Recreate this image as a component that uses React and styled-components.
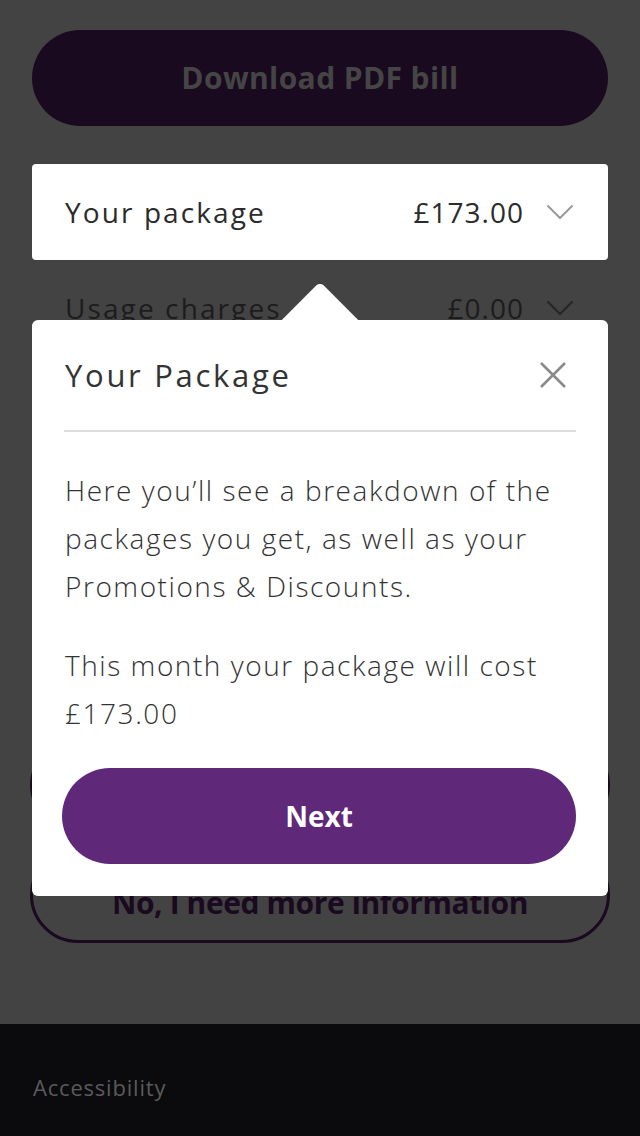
import styled, { createGlobalStyle } from 'styled-components';

const GlobalStyle = createGlobalStyle`
    * { box-sizing: border-box; }
    body {
        margin: 0;
        background: #424242;
        font-family: "Open Sans", "Liberation Sans", sans-serif;
    }
`;

const Page = styled.div`
    position: relative;
    width: 640px;
    min-height: 1136px;
    display: flex;
    flex-direction: column;
    background: #434343;
`;

const Main = styled.main`
    flex: 1;
    padding: 30px 32px 0;
    display: flex;
    flex-direction: column;
`;

const PillButton = styled.button`
    width: 100%;
    height: 96px;
    border-radius: 48px;
    border: ${(p) => (p.$outline ? '3px solid #1a0a1f' : 'none')};
    background: ${(p) => (p.$outline ? 'transparent' : '#1a0a1f')};
    color: ${(p) => (p.$outline ? '#1a0a1f' : '#454545')};
    padding-top: ${(p) => (p.$outline ? '16px' : '0')};
    font-family: inherit;
    font-size: 30px;
    font-weight: 700;
    letter-spacing: ${(p) => (p.$outline ? '-0.4px' : '0.4px')};
`;

const BillList = styled.div`
    margin-top: 38px;
    display: flex;
    flex-direction: column;
`;

const BillRow = styled.div`
    height: 96px;
    padding: 0 34px 0 33px;
    display: flex;
    align-items: center;
    border-radius: 4px;
    background: ${(p) => (p.$active ? '#ffffff' : 'transparent')};
    color: ${(p) => (p.$active ? '#2b2b2b' : '#1c1c1c')};
    font-size: 28px;
    letter-spacing: 2.1px;
`;

const RowLabel = styled.span`
    flex: 1;
`;

const RowAmount = styled.span`
    font-weight: 500;
    margin-right: 22px;
    letter-spacing: 1px;
`;

const Actions = styled.div`
    margin-top: 381px;
    display: flex;
    flex-direction: column;
    gap: 14px;
    margin-left: -2px;
    margin-right: -2px;
`;

const Footer = styled.footer`
    margin-top: 81px;
    height: 112px;
    background: #0b0a0d;
    display: flex;
    align-items: center;
    padding: 13px 33px 0;
    color: #5a5a5a;
    font-size: 22px;
    letter-spacing: 0.8px;
`;

const Popover = styled.section`
    position: absolute;
    top: 320px;
    left: 32px;
    width: 576px;
    background: #ffffff;
    border-radius: 6px;
    padding: 0 32px 32px;
    &::before {
        content: '';
        position: absolute;
        top: -27px;
        left: 261px;
        width: 54px;
        height: 54px;
        background: #ffffff;
        border-top-left-radius: 5px;
        transform: rotate(45deg);
    }
`;

const PopoverHeader = styled.header`
    position: relative;
    height: 112px;
    display: flex;
    align-items: center;
    justify-content: space-between;
    border-bottom: 2px solid #dddddd;
    padding-left: 1px;
`;

const PopoverTitle = styled.h2`
    margin: 0;
    font-size: 31px;
    font-weight: 400;
    color: #333333;
    letter-spacing: 2.7px;
`;

const CloseButton = styled.button`
    border: none;
    background: none;
    padding: 0;
    margin-right: 10px;
    display: flex;
`;

const Text = styled.p`
    margin: ${(p) => (p.$first ? '34px' : '31px')} 0 0 1px;
    font-size: 28px;
    font-weight: 300;
    line-height: 48px;
    letter-spacing: 1.55px;
    color: #333333;
`;

const NextButton = styled.button`
    margin-top: 31px;
    margin-left: -2px;
    width: calc(100% + 2px);
    height: 96px;
    border-radius: 48px;
    border: none;
    background: #5f2878;
    color: #ffffff;
    font-family: inherit;
    font-size: 28px;
    font-weight: 700;
`;

const Chevron = ({ color }) => (
    <svg width="28" height="16" viewBox="0 0 28 16" fill="none">
        <path d="M1.5 1.5L14 14L26.5 1.5" stroke={color} strokeWidth="2" />
    </svg>
);

const CloseIcon = () => (
    <svg width="26" height="26" viewBox="0 0 26 26" fill="none">
        <path d="M1 1L25 25M25 1L1 25" stroke="#8a8a8a" strokeWidth="2.6" />
    </svg>
);

export default function App() {
    return (
        <Page>
            <GlobalStyle />
            <Main>
                <PillButton>Download PDF bill</PillButton>
                <BillList>
                    <BillRow $active>
                        <RowLabel>Your package</RowLabel>
                        <RowAmount>£173.00</RowAmount>
                        <Chevron color="#9a9a9a" />
                    </BillRow>
                    <BillRow>
                        <RowLabel>Usage charges</RowLabel>
                        <RowAmount>£0.00</RowAmount>
                        <Chevron color="#262626" />
                    </BillRow>
                </BillList>
                <Actions>
                    <PillButton aria-label="Yes, my bill looks right" />
                    <PillButton $outline>No, I need more information</PillButton>
                </Actions>
            </Main>
            <Footer>Accessibility</Footer>
            <Popover>
                <PopoverHeader>
                    <PopoverTitle>Your Package</PopoverTitle>
                    <CloseButton aria-label="Close">
                        <CloseIcon />
                    </CloseButton>
                </PopoverHeader>
                <Text $first>
                    Here you’ll see a breakdown of the packages you get, as well as your
                    Promotions &amp; Discounts.
                </Text>
                <Text>This month your package will cost £173.00</Text>
                <NextButton>Next</NextButton>
            </Popover>
        </Page>
    );
}
